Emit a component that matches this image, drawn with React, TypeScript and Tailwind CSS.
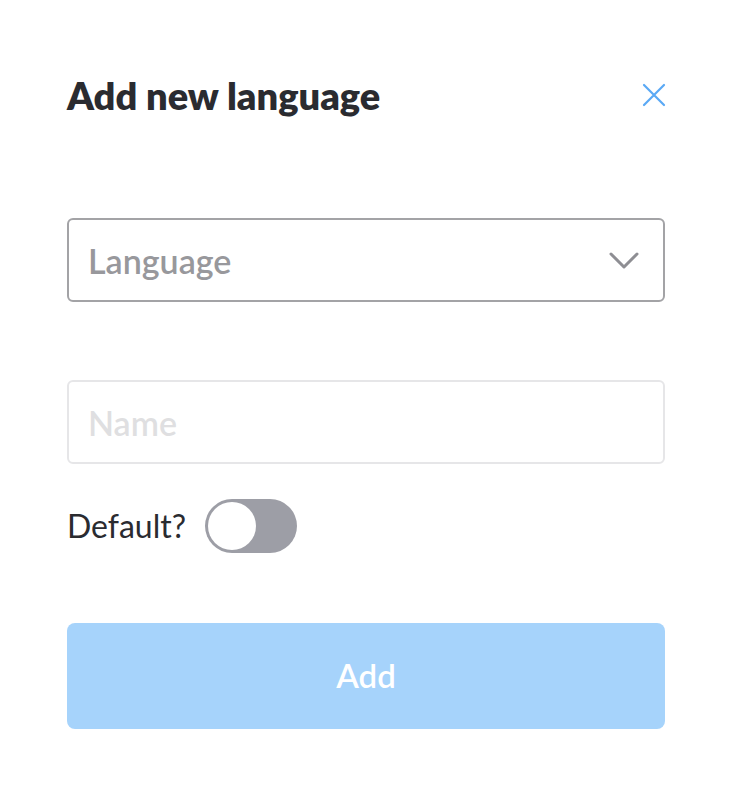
import { useState } from 'react';

export default function App() {
  const [isDefault, setIsDefault] = useState(false);

  return (
    <div className="min-h-[796px] w-full bg-white px-[67px] pt-[70px] font-['Lato',sans-serif] text-[#2a2b30]">
      <div className="flex items-center justify-between">
        <h1 className="text-[38px] font-extrabold leading-[50px]">Add new language</h1>
        <button className="mr-[-1px] text-[#5aa9f5]" aria-label="Close">
          <svg width="24" height="24" viewBox="0 0 24 24" fill="none" stroke="currentColor" strokeWidth="2.2" strokeLinecap="round">
            <path d="M2 2L22 22M22 2L2 22" />
          </svg>
        </button>
      </div>

      <div className="mt-[98px] flex h-[84px] items-center justify-between rounded-[6px] border-2 border-[#a3a3a6] pl-[19px] pr-[24px]">
        <span className="text-[34px] font-semibold text-[#98989c]">Language</span>
        <svg width="30" height="18" viewBox="0 0 30 18" fill="none" stroke="#8e8e93" strokeWidth="3" strokeLinecap="round" strokeLinejoin="round">
          <path d="M2 3L15 16L28 3" />
        </svg>
      </div>

      <div className="mt-[78px] flex h-[84px] items-center rounded-[6px] border-2 border-[#e6e6e8] pl-[19px]">
        <input
          placeholder="Name"
          className="w-full bg-transparent text-[34px] font-semibold outline-none placeholder:text-[#dfdfe1]"
        />
      </div>

      <div className="mt-[35px] flex items-center gap-[19px]">
        <span className="text-[32px]">Default?</span>
        <button
          onClick={() => setIsDefault(!isDefault)}
          className="relative h-[54px] w-[92px] rounded-full bg-[#9d9ea6]"
          aria-pressed={isDefault}
        >
          <span className="absolute left-[3px] top-[3px] h-[48px] w-[48px] rounded-full bg-white" />
        </button>
      </div>

      <button className="mt-[70px] flex h-[106px] w-full items-center justify-center rounded-[8px] bg-[#a6d3fb] text-[33px] font-semibold text-white">
        Add
      </button>
    </div>
  );
}
